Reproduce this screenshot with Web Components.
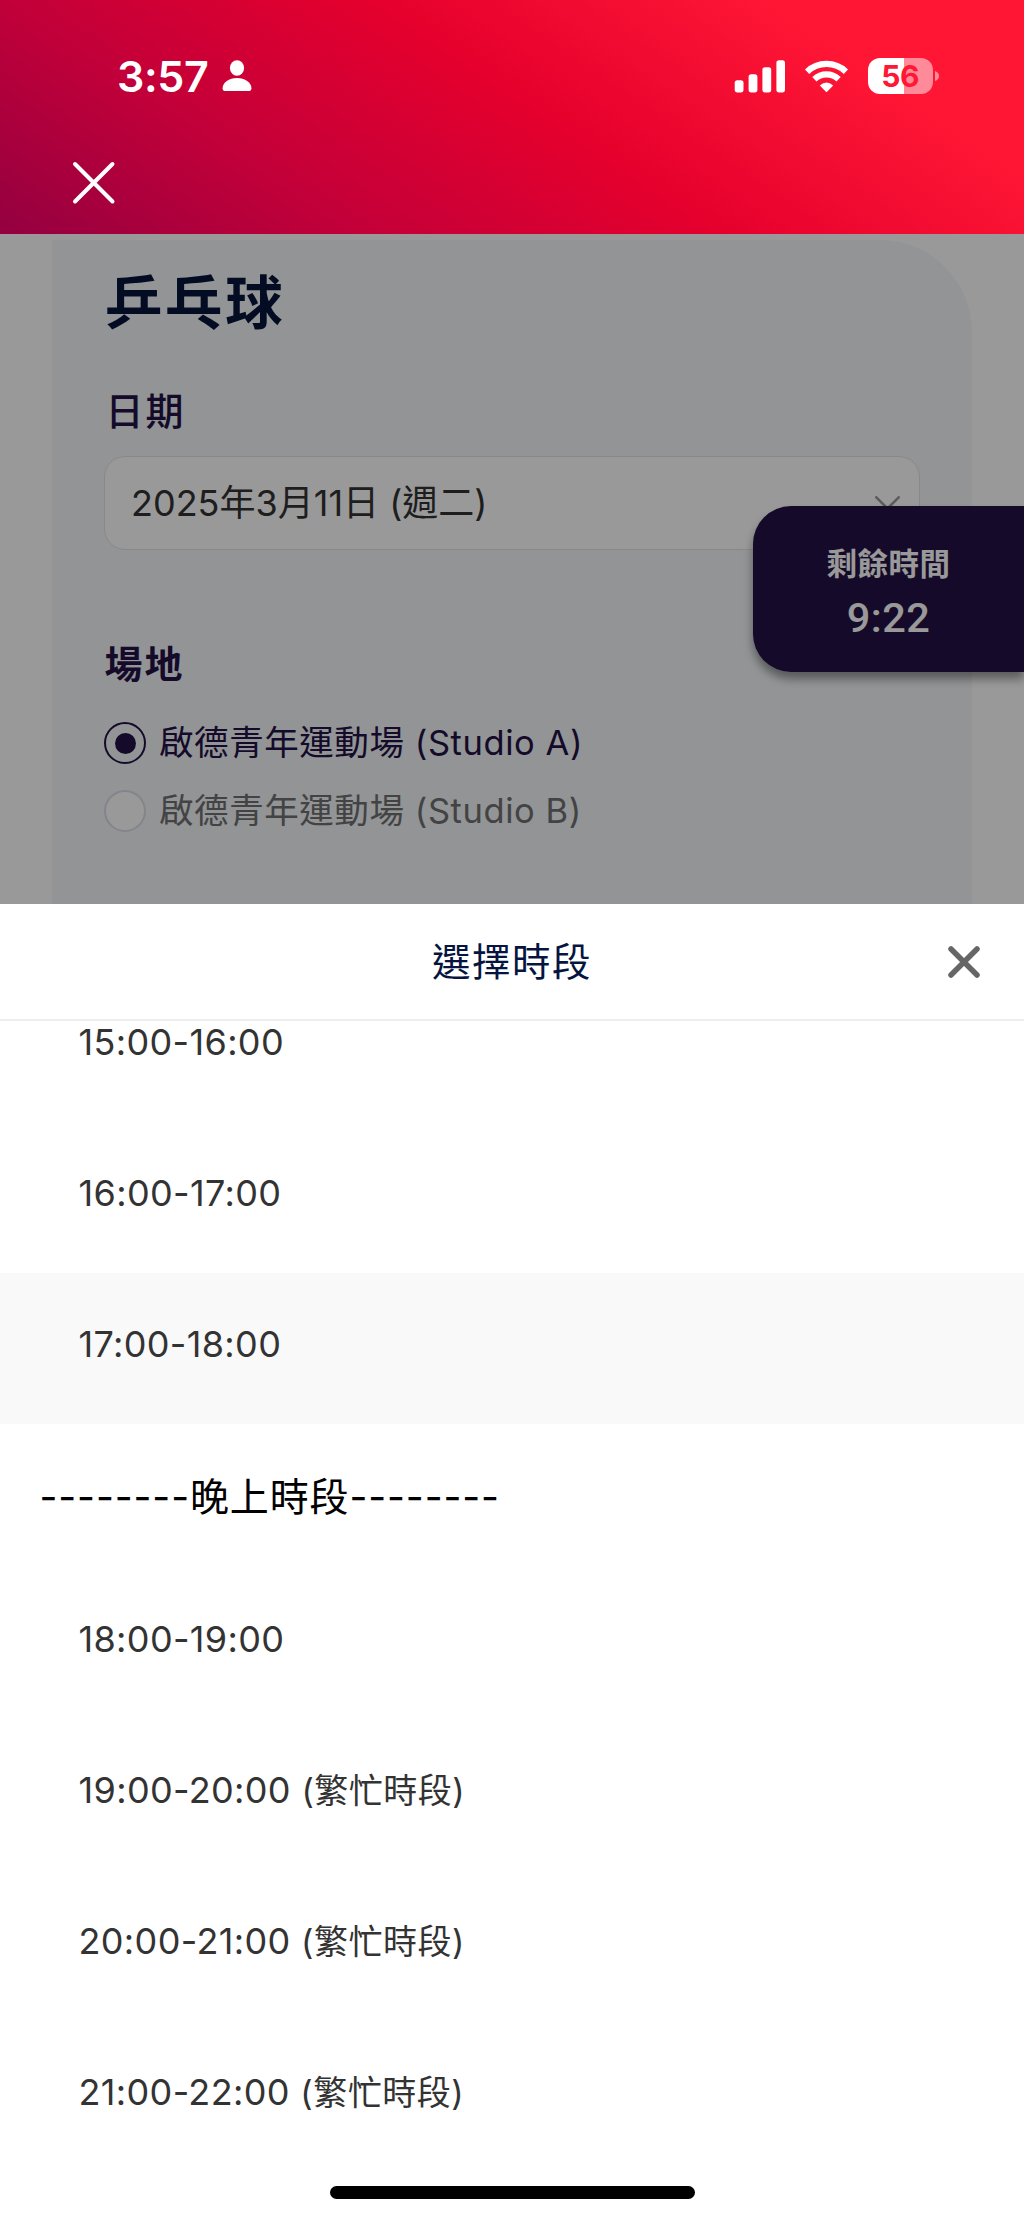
<!DOCTYPE html>
<html lang="zh-Hant">
<head>
<meta charset="utf-8">
<title>選擇時段</title>
<style>
html,body{margin:0;padding:0}
body{width:1024px;height:2220px;overflow:hidden;background:#fff;font-family:Inter,"Noto Sans CJK TC",sans-serif}
</style>
</head>
<body>
<booking-app></booking-app>
<script>
const define = (name, html) => {
  const template = document.createElement('template');
  template.innerHTML = html;
  customElements.define(name, class extends HTMLElement {
    constructor() {
      super();
      this.attachShadow({ mode: 'open' }).append(template.content.cloneNode(true));
    }
  });
};

define('signal-icon', `<style>:host{display:block;width:51px;height:33px}svg{display:block}</style>
<svg width="51" height="33" fill="#fff"><rect x=".7" y="20.2" width="8.8" height="12.2" rx="2.6"/><rect x="14.6" y="14.2" width="8.8" height="18.2" rx="2.6"/><rect x="28.4" y="7.2" width="8.8" height="25.2" rx="2.6"/><rect x="42.4" y=".3" width="8.6" height="32.1" rx="2.6"/></svg>`);

define('wifi-icon', `<style>:host{display:block;width:45px;height:33px}svg{display:block}</style>
<svg width="45" height="33" viewBox="0 0 45 33"><g fill="none" stroke="#fff"><path d="M3.1 11.7A28.2 28.2 0 0 1 41.9 11.7" stroke-width="6.2"/><path d="M10.4 19.2A17.8 17.8 0 0 1 34.6 19.2" stroke-width="6.2"/></g><path d="M15.8 25.6Q22.5 19.2 29.2 25.6L23.1 31.8Q22.5 32.4 21.9 31.8Z" fill="#fff"/></svg>`);

define('person-icon', `<style>:host{display:block;width:30px;height:32px}svg{display:block}</style>
<svg width="30" height="32" fill="#fff"><ellipse cx="15" cy="8" rx="7.1" ry="7.7"/><path d="M3.2 31Q.6 31 .6 28.2C.6 22.4 7 18 15 18S29.4 22.4 29.4 28.2Q29.4 31 26.8 31Z"/></svg>`);

define('battery-badge', `<style>:host{display:flex;align-items:center;gap:2px}
.cell{width:65.5px;height:36px;border-radius:12px;display:flex;align-items:center;justify-content:center;background:linear-gradient(90deg,#fff 36.5px,rgba(255,255,255,.5) 36.5px);color:#ff1735;font-weight:700;font-size:30px;line-height:36px;letter-spacing:-.3px}
</style><div class="cell"><slot></slot></div><svg width="4" height="10"><path d="M0 0Q4 1.5 4 5T0 10Z" fill="#fff" fill-opacity=".5"/></svg>`);

define('close-icon', `<style>:host{display:block;width:var(--size);height:var(--size)}svg{display:block;width:100%;height:100%;overflow:visible}path{fill:none;stroke:var(--ink);stroke-width:var(--weight);stroke-linecap:round}</style>
<svg viewBox="0 0 100 100"><path vector-effect="non-scaling-stroke" d="M0 0L100 100M100 0L0 100"/></svg>`);

define('app-header', `<style>
:host{display:block;height:234px;background:linear-gradient(34deg,#940040 0%,#c20039 26%,#e5002d 52.5%,#ff1635 81%);color:#fff}
.status{display:flex;align-items:center;height:152px;padding:0 85px 0 117px}
.time{font-weight:600;font-size:43px;line-height:60px;letter-spacing:-.4px;width:105px}
.gap{flex:1}
wifi-icon{margin:0 18.5px 0 19px}
close-icon{--size:37.5px;--ink:#fff;--weight:4px;margin:11.5px 0 0 75px}
</style>
<div class="status"><span class="time">3:57</span><person-icon></person-icon><span class="gap"></span><signal-icon></signal-icon><wifi-icon></wifi-icon><battery-badge>56</battery-badge></div>
<close-icon></close-icon>`);

define('date-select', `<style>
:host{display:flex;box-sizing:border-box;width:816px;height:94px;border:1px solid #e0e4e8;border-radius:21px;background:#fff;align-items:center;justify-content:space-between;padding:0 19px 0 26px;font-size:36px;line-height:46px;color:#333}
</style><slot></slot><svg width="25" height="14" viewBox="0 0 25 14" fill="none" stroke="#999" stroke-width="2.6" stroke-linecap="round"><path d="M1.3 1.3L12.5 12.5L23.7 1.3"/></svg>`);

define('venue-radio', `<style>
:host{display:flex;align-items:center;height:67.5px;font-size:34.5px;line-height:46px;color:#717171;letter-spacing:.57px;white-space:pre}
i{box-sizing:border-box;width:42px;height:42px;border-radius:50%;border:2.5px solid #dcdce8;background:#fff;display:flex;align-items:center;justify-content:center;margin-right:13px}
:host([checked]){color:#231245}
:host([checked]) i{border-color:#231245;background:none}
:host([checked]) i::after{content:"";width:21px;height:21px;border-radius:50%;background:#231245}
</style><i></i><span><slot></slot></span>`);

define('time-left', `<style>
:host{display:flex;flex-direction:column;align-items:center;box-sizing:border-box;width:271px;height:166.5px;padding-top:38px;border-radius:38px 0 0 38px;background:#231245;color:#fff;box-shadow:0 7px 10px rgba(0,0,0,.4)}
b{font-size:30.5px;line-height:40px;letter-spacing:.5px;font-weight:700}
span{font-family:Roboto,sans-serif;font-weight:500;font-size:41.5px;line-height:50px;letter-spacing:.5px;margin-top:9px}
</style><b><slot></slot></b><span><slot name="value"></slot></span>`);

define('booking-form', `<style>
:host{display:block;height:670px;position:relative;background:#fff;overflow:hidden}
.card{margin:5.5px 52px 0;height:700px;box-sizing:border-box;padding:30px 52px 0;background:#f4f7fa;border-radius:0 92px 0 0}
h1{margin:0 0 0 1px;font-size:57.5px;line-height:66px;font-weight:700;letter-spacing:2.6px;color:#06153a}
h2{margin:0;font-size:38px;line-height:50px;font-weight:600;letter-spacing:2px;color:#231245}
.date{margin:50px 0 20.5px 1.5px;font-weight:500}
.place{margin:89px 0 20.5px .5px}
time-left{position:absolute;right:0;top:271.5px}
.shade{position:absolute;inset:0;background:rgba(0,0,0,.4)}
</style>
<div class="card">
<h1>乒乓球</h1>
<h2 class="date">日期</h2>
<date-select>2025年3月11日 (週二)</date-select>
<h2 class="place">場地</h2>
<venue-radio checked>啟德青年運動場 (Studio A)</venue-radio>
<venue-radio>啟德青年運動場 (Studio B)</venue-radio>
</div>
<time-left>剩餘時間<span slot="value">9:22</span></time-left>
<div class="shade"></div>`);

define('slot-option', `<style>
:host{display:block;box-sizing:border-box;height:151px;padding:46px 0 0 78.5px;font-size:36px;line-height:50px;color:#333;white-space:pre;letter-spacing:.35px}
:host([active]){background:#f9f9f9}
::slotted(span){font-size:34px;letter-spacing:.5px}
</style><slot></slot>`);

define('slot-heading', `<style>
:host{display:block;box-sizing:border-box;height:144px;padding:47.5px 0 0 39.5px;font-size:39px;line-height:50px;color:#000;white-space:pre;letter-spacing:.87px}
</style><slot></slot>`);

define('slot-sheet', `<style>
:host{display:flex;flex-direction:column;height:1316px;background:#fff}
header{height:117px;box-sizing:border-box;border-bottom:2px solid #eee;display:grid;grid-template-columns:1fr auto 1fr;align-items:center;font-size:38.5px;line-height:50px;letter-spacing:1.5px;color:#06153f}
close-icon{--size:26px;--ink:#666;--weight:5.5px;justify-self:end;margin-right:47px}
.list{flex:1;overflow:hidden}
.items{margin-top:-50px}
footer{height:34px;display:flex;justify-content:center}
footer i{width:365px;height:13px;border-radius:7px;background:#000}
</style>
<header><span></span><slot name="title"></slot><close-icon></close-icon></header>
<div class="list"><div class="items"><slot></slot></div></div>
<footer><i></i></footer>`);

define('booking-app', `<style>:host{display:block;width:1024px;height:2220px}</style>
<app-header></app-header>
<booking-form></booking-form>
<slot-sheet><span slot="title">選擇時段</span>
<slot-option>15:00-16:00</slot-option>
<slot-option>16:00-17:00</slot-option>
<slot-option active>17:00-18:00</slot-option>
<slot-heading>--------晚上時段--------</slot-heading>
<slot-option>18:00-19:00</slot-option>
<slot-option>19:00-20:00 <span>(繁忙時段)</span></slot-option>
<slot-option>20:00-21:00 <span>(繁忙時段)</span></slot-option>
<slot-option>21:00-22:00 <span>(繁忙時段)</span></slot-option>
</slot-sheet>`);
</script>
</body>
</html>
